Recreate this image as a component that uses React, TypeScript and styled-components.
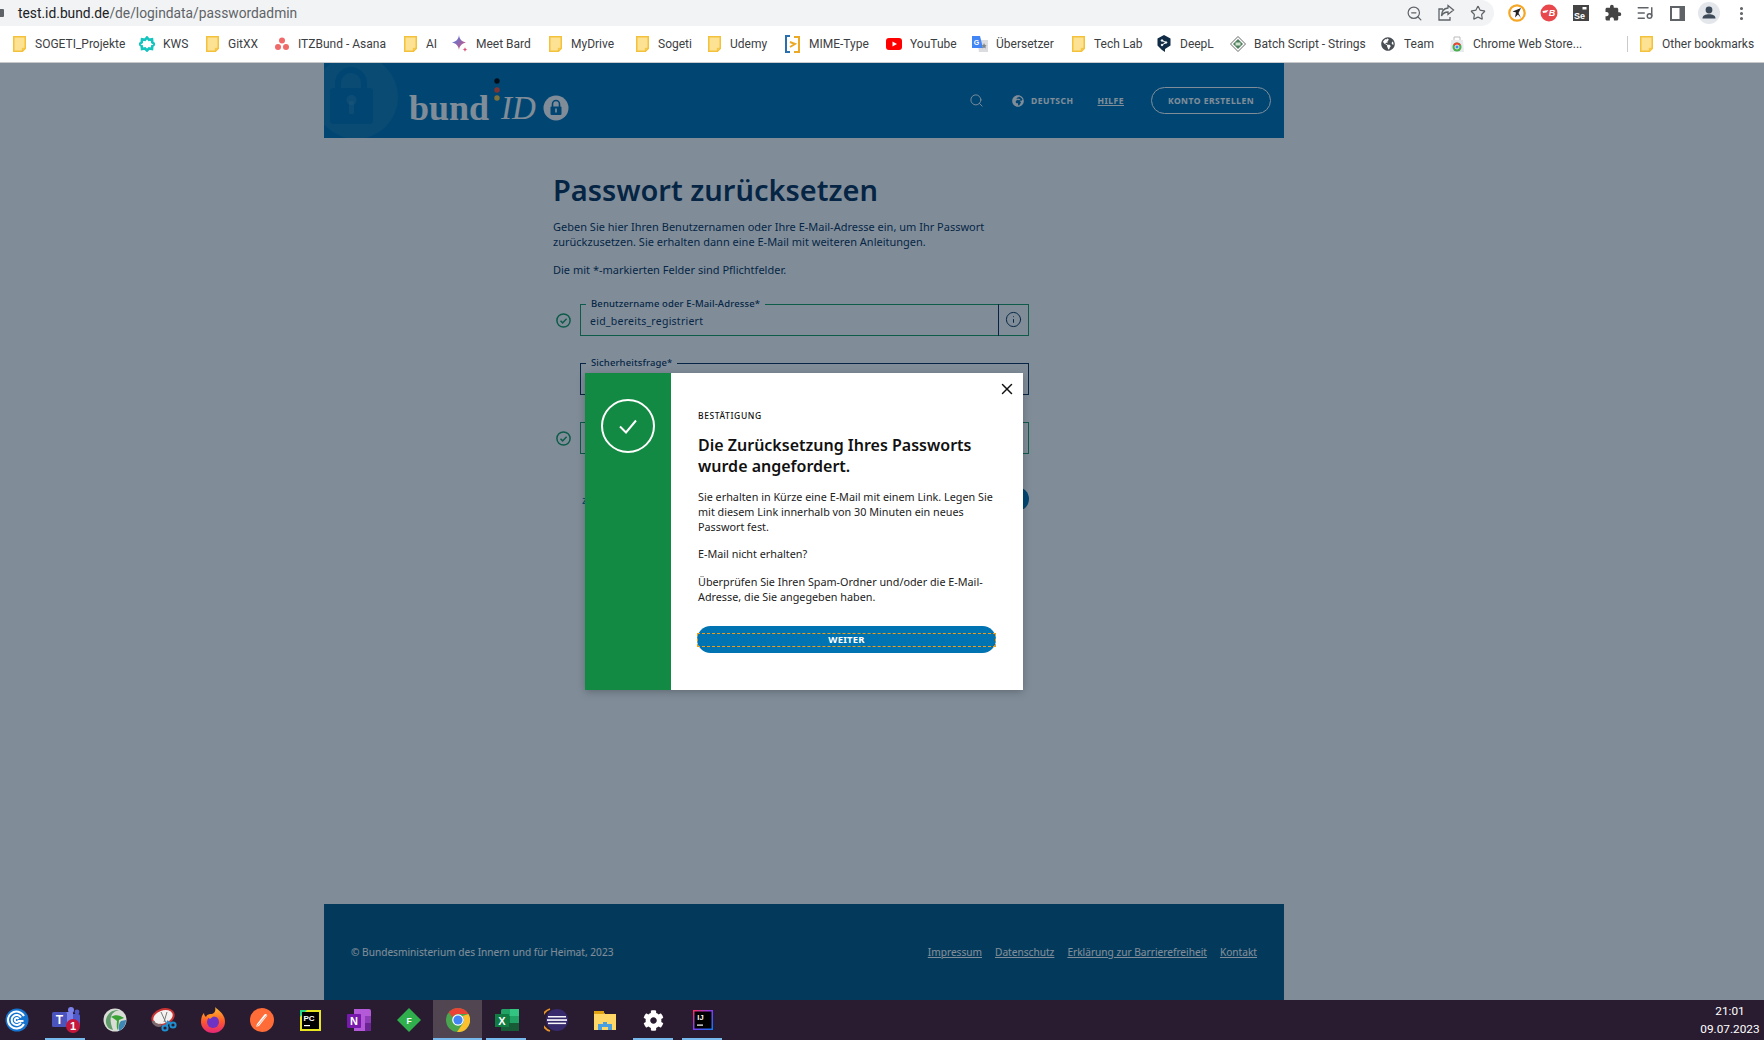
import React from 'react';
import styled, { createGlobalStyle } from 'styled-components';
import { ZoomOut, Star, ListMusic, EllipsisVertical, Search, X, Info } from 'lucide-react';
import { MdExtension } from 'react-icons/md';
import { FaCog, FaGlobeAfrica, FaGlobeAmericas } from 'react-icons/fa';

const Global = createGlobalStyle`
  html, body { margin: 0; padding: 0; height: 100%; overflow: hidden; background: #fff; }
  #root { height: 100%; }
  * { box-sizing: border-box; }
`;

const PLEX = `"Noto Sans", Roboto, sans-serif`;
const UI = `Roboto, "Liberation Sans", sans-serif`;
const NAVY = '#0a2f55';
const OK = '#1a9a5f';

const Screen = styled.div`
  width: 1764px; height: 1040px; display: flex; flex-direction: column; overflow: hidden;
`;

/* ---------- browser chrome ---------- */
const TopBar = styled.div`
  height: 26px; flex: none; display: flex; background: #fff;
`;
const Omnibox = styled.div`
  width: 1494px; height: 26px; background: #f1f3f4; border-radius: 0 13px 13px 0;
  display: flex; align-items: center; padding-left: 18px; position: relative;
`;
const LockStub = styled.span`
  position: absolute; left: -3px; top: 9px; width: 7px; height: 8px; background: #5f6368; border-radius: 1px;
`;
const Url = styled.span`
  font: 13.8px/26px ${UI}; color: #5f6368; flex: 1;
  b { font-weight: 400; color: #202124; }
`;
const Tool = styled.span`
  width: 32px; height: 26px; flex: none; display: flex; align-items: center; justify-content: center; color: #5f6368;
`;
const ToolGroup = styled.div`
  display: flex; padding-left: 7px;
`;

const Bookmarks = styled.div`
  height: 37px; flex: none; display: flex; align-items: center; padding: 0 0 1px 11px; background: #fff;
  border-bottom: 1px solid #c8cacc;
`;
const Bookmark = styled.div<{ $w: number }>`
  flex: 0 0 ${p => p.$w}px; display: flex; align-items: center; white-space: nowrap;
  font: 12px/18px ${UI}; color: #3c4043;
`;
const BookmarkIcon = styled.span`
  width: 16px; height: 16px; margin-right: 8px; flex: none; display: flex; align-items: center; justify-content: center;
`;
const Divider = styled.span`
  width: 1px; height: 16px; background: #c8cacc; flex: none; margin-right: 10px;
`;

const Folder = () => (
  <svg width="13" height="16" viewBox="0 0 13 16">
    <path d="M.75.75h11.5v11.7l-2.8 2.8H.75z" fill="#fde293" stroke="#f3c13b" strokeWidth="1.5" />
    <path d="M9.3 15v-2.7H12" fill="none" stroke="#f3c13b" />
  </svg>
);

/* ---------- page ---------- */
const Viewport = styled.div`
  flex: 1; min-height: 0; position: relative; background: #fff; padding-left: 324px;
`;
const Shell = styled.div`
  width: 960px; height: 100%; display: flex; flex-direction: column;
`;
const Header = styled.header`
  height: 75px; flex: none; background: #0071b0; display: flex; align-items: center; color: #fff; overflow: hidden;
`;
const Watermark = styled.svg`
  width: 85px; height: 75px; flex: none;
`;
const Logo = styled.div`
  display: flex; align-items: center; margin-top: 15px; position: relative;
`;
const LogoBund = styled.span`
  font: 700 36px/36px "Liberation Serif", serif; color: #fff; margin-right: 12px;
`;
const LogoId = styled.span`
  font: italic 400 33px/36px "Liberation Serif", serif; color: #fff; margin-right: 7px;
`;
const LogoDots = styled.svg`
  position: absolute; left: 85px; top: -12px; width: 6px; height: 24px;
`;
const Nav = styled.nav`
  margin-left: auto; display: flex; align-items: center; padding-right: 13px; font-family: ${PLEX}; color: #fff;
`;
const NavSearch = styled.span`
  display: flex; margin-right: 28px;
`;
const NavText = styled.span`
  font-size: 8.5px; font-weight: 700; letter-spacing: .5px; margin-left: 7px; margin-right: 24px;
`;
const NavLink = styled.a`
  font-size: 8.5px; font-weight: 700; letter-spacing: .5px; text-decoration: underline; margin-right: 27px;
`;
const NavButton = styled.button`
  width: 120px; height: 27px; border: 1px solid #fff; border-radius: 14px; background: none; color: #fff;
  font: 700 8.5px ${PLEX}; letter-spacing: .5px; padding: 0;
`;

const Content = styled.main`
  flex: 1; padding: 33px 0 0 229px; background: #fff; color: ${NAVY}; font-family: ${PLEX};
`;
const Column = styled.div`
  width: 476px;
`;
const Title = styled.h1`
  margin: 0; font: 600 29px/38px ${PLEX}; color: ${NAVY};
`;
const Para = styled.p`
  margin: 10px 0 0; font-size: 11px; line-height: 15px; color: ${NAVY}; width: 440px;
`;
const Note = styled(Para)`
  margin-top: 13px;
`;
const FieldRow = styled.div<{ $top: number }>`
  display: flex; align-items: center; margin-top: ${p => p.$top}px; height: 38px;
`;
const Check = styled.span`
  width: 27px; flex: none; display: flex; padding-left: 3px; margin-top: 6px;
`;
const FieldSet = styled.fieldset<{ $ok?: boolean }>`
  width: 449px; height: 38px; margin: 0; padding: 0 0 0 9px; display: flex; align-items: center;
  border: 1px solid ${p => (p.$ok ? OK : NAVY)}; 
`;
const Legend = styled.legend`
  font-size: 9.5px; line-height: 12px; font-weight: 500; letter-spacing: .12px; padding: 0 5px; margin-left: -4px; color: ${NAVY};
`;
const Value = styled.span`
  flex: 1; font-size: 10.5px; color: ${NAVY}; letter-spacing: .25px; margin-top: -3px;
`;
const InfoCell = styled.span`
  width: 30px; flex: none; margin-top: -6px; height: 32px; display: flex; align-items: center; justify-content: center;
  border-left: 1px solid ${NAVY}; color: ${NAVY};
`;
const ActionRow = styled.div`
  display: flex; align-items: center; justify-content: space-between; margin: 33px 0 0 29px;
`;
const BackLink = styled.a`
  font-size: 11px; color: #0071b0;
`;
const Submit = styled.button`
  width: 130px; height: 24px; border: 0; border-radius: 12px; background: #0071b0; color: #fff;
`;
const Footer = styled.footer`
  height: 96px; flex: none; background: #055882; color: #fff; display: flex; align-items: center;
  justify-content: space-between; padding: 0 27px; font: 10.15px ${PLEX};
`;
const FooterLinks = styled.div`
  display: flex; gap: 13px;
`;
const FooterLink = styled.a`
  text-decoration: underline;
`;

/* ---------- modal ---------- */
const Overlay = styled.div`
  position: absolute; inset: 0; background: rgba(1, 28, 51, .5);
`;
const Modal = styled.div`
  position: absolute; left: 585px; top: 310px; width: 438px; height: 317px; display: flex; background: #fff;
  box-shadow: 0 2px 8px rgba(0,0,0,.25); font-family: ${PLEX}; color: #111;
`;
const Side = styled.div`
  width: 86px; flex: none; background: #138a43; display: flex; justify-content: center; padding-top: 26px;
`;
const Body = styled.div`
  flex: 1; padding: 37px 27px 0 27px; position: relative;
`;
const Close = styled.span`
  position: absolute; right: 14px; top: 7px; display: flex; color: #111;
`;
const Eyebrow = styled.div`
  font-size: 8.5px; line-height: 12px; letter-spacing: .6px; font-weight: 500; color: #111;
`;
const ModalTitle = styled.h2`
  margin: 13px 0 0; font: 600 16px/20.5px ${PLEX}; color: #111;
`;
const ModalText = styled.p`
  margin: 13px 0 0; font-size: 10.8px; line-height: 15px; color: #222; width: 305px;
`;
const Gap = styled.span<{ $h: number }>`
  display: block; height: ${p => p.$h}px;
`;
const Primary = styled.button`
  width: 299px; height: 27px; margin: 22px 0 0 -1px; padding: 0; border: 0; border-radius: 14px; background: #0073b3;
  display: flex; align-items: center;
`;
const Focus = styled.span`
  width: 100%; height: 14px; border: 1px dashed #f39c12; color: #fff; font: 700 9.5px/12px ${PLEX}; letter-spacing: .2px;
`;

/* ---------- taskbar ---------- */
const Taskbar = styled.div`
  height: 40px; flex: none; background: #2a1c30; display: flex; align-items: stretch;
`;
const TaskList = styled.div`
  display: flex; margin-left: -8px;
`;
const TaskSlot = styled.div<{ $open?: boolean; $active?: boolean }>`
  width: 49px; height: 40px; position: relative; display: flex; align-items: center; justify-content: center;
  background: ${p => (p.$active ? '#504550' : 'transparent')};
  &::after {
    content: ''; position: absolute; left: ${p => (p.$active ? '0' : '4px')}; right: ${p => (p.$active ? '0' : '5px')}; bottom: 0; height: 2px;
    background: ${p => (p.$open ? '#76b9ed' : 'transparent')};
  }
`;
const Clock = styled.div`
  margin-left: auto; width: 68px; display: flex; flex-direction: column; align-items: center; justify-content: center; gap: 3px;
  color: #fff; font: 11.8px/15px ${UI};
`;

const T = (p: React.SVGProps<SVGTextElement>) => <text fontFamily="Liberation Sans, sans-serif" fontWeight="700" textAnchor="middle" {...p} />;

const icons: React.ReactNode[] = [
  <svg width="24" height="24" viewBox="0 0 24 24"><circle cx="12" cy="12" r="11.5" fill="#1674d1" /><g fill="none" stroke="#fff" strokeWidth="2"><path d="M19 8a8.5 8.5 0 1 0 0 8" /><path d="M16 9.5a5 5 0 1 0 0 5" /><path d="M13.5 11a2 2 0 1 0 0 2h5" /></g></svg>,
  <svg width="32" height="28" viewBox="0 0 32 28"><circle cx="21" cy="4" r="3" fill="#7b83eb" /><circle cx="27" cy="6" r="2.4" fill="#5059c9" /><rect x="17" y="8" width="13" height="13" rx="2" fill="#5059c9" /><rect x="9" y="6" width="14" height="15" rx="1" fill="#7b83eb" /><rect x="2" y="6" width="15" height="15" rx="1.5" fill="#4b53bc" /><T x="9.5" y="18" fontSize="12" fill="#fff">T</T><circle cx="23" cy="20" r="7" fill="#c4173c" /><T x="23" y="24" fontSize="11" fill="#fff">1</T></svg>,
  <svg width="24" height="24" viewBox="0 0 24 24"><circle cx="12" cy="12" r="11.5" fill="#d9ddd6" /><path d="M3 15C2 8 8 1 16 2c-4 1-7 3-8 7-1 3 0 8 2 13-4-1-6-3-7-7z" fill="#5f9b6a" /><path d="M8 9c4-3 9-2 13 1l-5 2-1 10c-2-2-1-8-1-9-2-2-4-3-6-4z" fill="#3aa335" /><path d="M23 12c0 5-3 9-7 11-1-4 0-8 2-10z" fill="#3e86b3" /></svg>,
  <svg width="26" height="24" viewBox="0 0 26 24"><ellipse cx="12" cy="9" rx="11" ry="7.5" transform="rotate(-20 12 9)" fill="#f4f1f1" stroke="#c83232" strokeWidth="2" /><path d="M2 13c1 4 5 5 8 4" fill="none" stroke="#7a6a70" strokeWidth="3" /><path d="M10 4l6 13M16 4l-3 10" stroke="#777" strokeWidth="1" /><g fill="none" stroke="#1e8fd0" strokeWidth="2"><circle cx="14" cy="20" r="2.6" /><circle cx="22" cy="17" r="2.6" /><path d="M15.5 18l2-4M20 16l-4-3" /></g></svg>,
  <svg width="24" height="26" viewBox="0 0 24 26"><defs><linearGradient id="ff" x1="0" y1="0" x2="0" y2="1"><stop offset="0" stopColor="#ffbd2e" /><stop offset=".55" stopColor="#ff5a2b" /><stop offset="1" stopColor="#e6247a" /></linearGradient></defs><path d="M14 0c4 4 10 7 10 15a12 11 0 0 1-24 0c0-4 1-7 3-9 0 2 1 3 2 4 1-3 4-3 6-3 3-1 4-4 3-7z" fill="url(#ff)" /><circle cx="12" cy="15" r="6" fill="#6e32c4" /><path d="M6 9c3-2 8-2 10 1-3-1-5 0-7 2z" fill="#ff8a1f" /></svg>,
  <svg width="24" height="24" viewBox="0 0 24 24"><circle cx="12" cy="12" r="12" fill="#ff6c37" /><path d="M6 19l3-1 8-10c1-1.5-1.5-3-2.600-1.500L7 16z" fill="#fff" /><path d="M5.500 20l13-15" stroke="#ff6c37" strokeWidth=".6" /></svg>,
  <svg width="21" height="21" viewBox="0 0 21 21"><rect width="21" height="21" fill="#e8e61f" /><path d="M0 0h7L0 7z" fill="#21d789" /><rect x="2" y="2" width="17" height="17" fill="#000" /><T x="9" y="11" fontSize="8" fill="#fff">PC</T><rect x="4" y="15" width="6" height="1.200" fill="#fff" /></svg>,
  <svg width="25" height="24" viewBox="0 0 25 24"><path d="M7 1h15a2 2 0 0 1 2 2v18a2 2 0 0 1-2 2H7z" fill="#b45ad8" /><path d="M18 8h6v7h-6z" fill="#8e3cb8" /><path d="M18 15h6v8h-4a2 2 0 0 1-2 0z" fill="#6b2494" /><rect x="0" y="6" width="14" height="14" rx="1" fill="#7719aa" /><T x="7" y="17" fontSize="11" fill="#fff">N</T></svg>,
  <svg width="24" height="24" viewBox="0 0 24 24"><path d="M12 0l12 12-12 12L0 12z" fill="#2fb04c" /><T x="12" y="15.500" fontSize="8.500" fill="#fff">F</T></svg>,
  <svg width="24" height="24" viewBox="0 0 24 24"><circle cx="12" cy="12" r="12" fill="#4aa54f" /><path d="M12 0a12 12 0 0 1 10.400 6H12a6 6 0 0 0-5.500 3.500L2.800 4.300A12 12 0 0 1 12 0z" fill="#ea4335" /><path d="M22.400 6A12 12 0 0 1 11 24l5.500-8a6 6 0 0 0 0-8z" fill="#fbc02d" /><circle cx="12" cy="12" r="5.800" fill="#fff" /><circle cx="12" cy="12" r="4.600" fill="#4285f4" /></svg>,
  <svg width="24" height="22" viewBox="0 0 24 22"><rect x="6" y="0" width="18" height="22" rx="1.500" fill="#21a366" /><rect x="15" y="0" width="9" height="7" fill="#33c481" /><rect x="15" y="7" width="9" height="7" fill="#21a366" /><rect x="6" y="7" width="9" height="7" fill="#107c41" /><rect x="6" y="14" width="18" height="8" fill="#185c37" /><rect x="0" y="5" width="14" height="13" fill="#107c41" /><T x="7" y="15.500" fontSize="11" fill="#fff">X</T></svg>,
  <svg width="24" height="24" viewBox="0 0 24 24"><path d="M6 1A11.500 11.500 0 0 0 6 23" fill="none" stroke="#e6932a" strokeWidth="1.800" /><circle cx="13" cy="12" r="11" fill="#362a6c" /><rect x="4" y="8" width="18" height="1.500" fill="#f7f7fa" /><rect x="3" y="11.200" width="20" height="1.700" fill="#f7f7fa" /><rect x="4" y="14.600" width="18" height="1.500" fill="#f7f7fa" /></svg>,
  <svg width="22" height="20" viewBox="0 0 22 20"><path d="M0 1h9l2 3h11v16H0z" fill="#ffd767" /><path d="M0 1h10v3H0z" fill="#e0a412" /><path d="M4 20v-6h5v-2h4v2h5v6h-4v-3H8v3z" fill="#4a9fe0" /></svg>,
  <FaCog size={21} color="#fff" />,
  <svg width="20" height="20" viewBox="0 0 20 20"><defs><linearGradient id="ij" x1="0" y1="0" x2="1" y2="1"><stop offset="0" stopColor="#fe315d" /><stop offset=".5" stopColor="#7b3ff2" /><stop offset="1" stopColor="#087cfa" /></linearGradient></defs><rect width="20" height="20" fill="url(#ij)" /><rect x="1.500" y="1.500" width="17" height="17" fill="#000" /><T x="7.500" y="10" fontSize="7.500" fill="#fff">IJ</T><rect x="4" y="14.500" width="6" height="1.200" fill="#fff" /></svg>,
];

type BM = { w: number; label: string; icon?: React.ReactNode };
const bookmarks: BM[] = [
  { w: 128, label: 'SOGETI_Projekte' },
  { w: 65, label: 'KWS', icon: <svg width="16" height="16" viewBox="0 0 16 16"><path d="M8 1.500l2 2.300 3-.5.300 3 2 1.700-2 2-.3 3-3-.5-2 2-2-2-3 .5-.3-3-2-2 2-1.700.3-3 3 .5z" fill="#fff" stroke="#14c4bf" strokeWidth="2.600" /></svg> },
  { w: 70, label: 'GitXX' },
  { w: 128, label: 'ITZBund - Asana', icon: <svg width="14" height="14" viewBox="0 0 14 14" fill="#f06a6a"><circle cx="7" cy="3.500" r="3" /><circle cx="3" cy="10" r="3" /><circle cx="11" cy="10" r="3" /></svg> },
  { w: 50, label: 'AI' },
  { w: 95, label: 'Meet Bard', icon: <svg width="16" height="18" viewBox="0 0 16 18"><defs><linearGradient id="bd" x1="0" y1="0" x2="1" y2="1"><stop offset="0" stopColor="#3f7ff0" /><stop offset="1" stopColor="#e0506f" /></linearGradient></defs><path d="M7 0c.5 4 2.500 6.500 7 7.500-4.500 1-6.500 3.500-7 7.500-.5-4-2.500-6.500-7-7.500 4.500-1 6.500-3.500 7-7.500z" fill="url(#bd)" /><path d="M13 12c.2 1.500 1 2.300 2.500 2.500-1.500.2-2.300 1-2.500 2.500-.2-1.500-1-2.300-2.500-2.500 1.500-.2 2.300-1 2.500-2.500z" fill="#d9547a" /></svg> },
  { w: 87, label: 'MyDrive' },
  { w: 72, label: 'Sogeti' },
  { w: 79, label: 'Udemy' },
  { w: 101, label: 'MIME-Type', icon: <svg width="16" height="18" viewBox="0 0 16 18" fill="none" strokeWidth="2"><path d="M5 1H1v16h4" stroke="#2a6fb0" /><path d="M9 2h5v15H9" stroke="#eba927" /><path d="M5 7l5 2-5 3" stroke="#eba927" /></svg> },
  { w: 86, label: 'YouTube', icon: <svg width="16" height="12" viewBox="0 0 16 12"><rect width="16" height="12" rx="3" fill="#f00" /><path d="M6.500 3.500v5L11 6z" fill="#fff" /></svg> },
  { w: 98, label: 'Übersetzer', icon: <svg width="16" height="16" viewBox="0 0 16 16"><path d="M5 4h11v12H7z" fill="#dadce0" /><path d="M0 0h8l3 12H0z" fill="#4285f4" /><text x="4.500" y="9" fontFamily="Liberation Sans, sans-serif" fontWeight="700" fontSize="7" fill="#fff" textAnchor="middle">G</text><path d="M12 7l1 2 1.500.3-1 1.300.2 1.800-1.700-.8-1.500.8.2-1.800-1-1.300 1.500-.3z" fill="#80868b" /></svg> },
  { w: 86, label: 'Tech Lab' },
  { w: 74, label: 'DeepL', icon: <svg width="14" height="17" viewBox="0 0 14 17"><path d="M7 0l6.500 3.500v7L8 14v3l-3-2-4.500-4.500v-7z" fill="#0f2b46" /><g stroke="#fff" strokeWidth="1" fill="#fff"><path d="M5 5.500L9 7.500 5 10" fill="none" /><circle cx="5" cy="5.500" r=".8" /><circle cx="9" cy="7.500" r=".8" /><circle cx="5" cy="10" r=".8" /></g></svg> },
  { w: 150, label: 'Batch Script - Strings', icon: <svg width="16" height="16" viewBox="0 0 16 16"><path d="M8 .5L15.500 8 8 15.500.5 8z" fill="#fff" stroke="#666" /><path d="M8 3l5 5-5 5-5-5z" fill="#4f7f5f" /><rect x="5.500" y="6.500" width="5" height="3" fill="#cfe3cf" /></svg> },
  { w: 69, label: 'Team', icon: <FaGlobeAmericas size={14} color="#4a4f55" /> },
  { w: 178, label: 'Chrome Web Store...', icon: <svg width="14" height="16" viewBox="0 0 14 16"><path d="M1 4h12l1 12H0z" fill="#e8eaed" /><path d="M4 4V1h6v3" fill="none" stroke="#bbb" /><circle cx="7" cy="11" r="4.500" fill="#4caf50" /><path d="M7 6.500A4.500 4.500 0 0 1 11 9H7a2 2 0 0 0-2 1L3.300 8.500A4.500 4.500 0 0 1 7 6.500z" fill="#ea4335" /><circle cx="7" cy="11" r="2" fill="#4285f4" stroke="#fff" strokeWidth=".8" /></svg> },
];

const CheckMini = () => (
  <svg width="15" height="15" viewBox="0 0 15 15" fill="none" stroke={OK} strokeWidth="1.500">
    <circle cx="7.500" cy="7.500" r="6.600" />
    <path d="M4.500 7.800l2.100 2.100 4-4.200" />
  </svg>
);

export default function App() {
  return (
    <Screen>
      <Global />
      <TopBar>
        <Omnibox>
          <LockStub />
          <Url><b>test.id.bund.de</b>/de/logindata/passwordadmin</Url>
          <Tool><ZoomOut size={17} strokeWidth={1.7} /></Tool>
          <Tool>
            <svg width="18" height="18" viewBox="0 0 18 18" fill="none" stroke="#5f6368" strokeWidth="1.300">
              <path d="M6 5H2v11h11v-3" />
              <path d="M11 1.500L16.500 6 11 10.500V8C8 8 6 9 4.500 12 4.500 7.500 7 4.500 11 4z" />
            </svg>
          </Tool>
          <Tool><Star size={16} strokeWidth={1.8} /></Tool>
        </Omnibox>
        <ToolGroup>
          <Tool>
            <svg width="18" height="18" viewBox="0 0 18 18">
              <circle cx="9" cy="9" r="7.700" fill="#fff" stroke="#f5a623" strokeWidth="2.200" />
              <path d="M13 4L4.500 7.500l3.500 1-1 5 3-3 3 3.500-2.500-5z" fill="#222" />
            </svg>
          </Tool>
          <Tool>
            <svg width="18" height="18" viewBox="0 0 18 18">
              <circle cx="9" cy="9" r="8.500" fill="#e8474c" />
              <path d="M2.500 7l6-1-2 2.500L3 9z" fill="#fff" />
              <text x="12" y="12" fontFamily="Liberation Sans, sans-serif" fontStyle="italic" fontWeight="700" fontSize="9" fill="#fff" textAnchor="middle">B</text>
            </svg>
          </Tool>
          <Tool>
            <svg width="16" height="16" viewBox="0 0 16 16">
              <rect width="16" height="16" fill="#444" />
              <rect x="9.500" y="2" width="4" height="2.500" fill="#fff" />
              <text x="6.500" y="14" fontFamily="Liberation Sans, sans-serif" fontWeight="700" fontSize="9" fill="#fff" textAnchor="middle">Se</text>
            </svg>
          </Tool>
          <Tool><MdExtension size={18} color="#444" /></Tool>
          <Tool><ListMusic size={18} strokeWidth={2} color="#5f6368" /></Tool>
          <Tool>
            <svg width="15" height="15" viewBox="0 0 15 15">
              <rect width="15" height="15" fill="#5f6368" />
              <rect x="2" y="2" width="7.500" height="11" fill="#fff" />
            </svg>
          </Tool>
          <Tool>
            <svg width="22" height="22" viewBox="0 0 22 22">
              <circle cx="11" cy="11" r="11" fill="#e3e6ea" />
              <circle cx="11" cy="8" r="3.400" fill="#3c4a5a" />
              <path d="M4.500 16.500c0-3 3-4.300 6.500-4.300s6.500 1.300 6.500 4.300z" fill="#3c4a5a" />
            </svg>
          </Tool>
          <Tool><EllipsisVertical size={17} strokeWidth={2.400} /></Tool>
        </ToolGroup>
      </TopBar>

      <Bookmarks>
        {bookmarks.map(b => (
          <Bookmark key={b.label} $w={b.w}>
            <BookmarkIcon>{b.icon ?? <Folder />}</BookmarkIcon>
            {b.label}
          </Bookmark>
        ))}
        <Divider />
        <Bookmark $w={110}>
          <BookmarkIcon><Folder /></BookmarkIcon>
          Other bookmarks
        </Bookmark>
      </Bookmarks>

      <Viewport>
        <Shell>
          <Header>
            <Watermark viewBox="0 0 85 75">
              <circle cx="32" cy="34" r="42" fill="rgba(255,255,255,.07)" />
              <path d="M14 28v-8a13 13 0 0 1 26 0v8" fill="none" stroke="#0071b0" strokeWidth="6" />
              <rect x="6" y="25" width="43" height="36" rx="3" fill="#0071b0" />
              <circle cx="27.500" cy="37" r="5" fill="rgba(255,255,255,.09)" />
              <rect x="25" y="38" width="5" height="13" rx="1.500" fill="rgba(255,255,255,.09)" />
            </Watermark>
            <Logo>
              <LogoDots viewBox="0 0 6 24">
                <circle cx="3" cy="3" r="2.700" fill="#000" />
                <circle cx="3" cy="12" r="2.700" fill="#ff4a2a" />
                <circle cx="3" cy="20" r="2.700" fill="#ffc83a" />
              </LogoDots>
              <LogoBund>bund</LogoBund>
              <LogoId>ID</LogoId>
              <svg width="26" height="26" viewBox="0 0 26 26">
                <circle cx="13" cy="13" r="12.500" fill="#fff" />
                <path d="M9.500 12V9a3.500 3.500 0 0 1 7 0v3" fill="none" stroke="#0071b0" strokeWidth="1.600" />
                <rect x="7.500" y="11.500" width="11" height="8.500" rx="1" fill="#0071b0" />
                <rect x="12.200" y="13.500" width="1.600" height="4" fill="#fff" />
              </svg>
            </Logo>
            <Nav>
              <NavSearch><Search size={15} strokeWidth={1.500} /></NavSearch>
              <FaGlobeAfrica size={12} />
              <NavText>DEUTSCH</NavText>
              <NavLink>HILFE</NavLink>
              <NavButton>KONTO ERSTELLEN</NavButton>
            </Nav>
          </Header>

          <Content>
            <Column>
              <Title>Passwort zurücksetzen</Title>
              <Para>Geben Sie hier Ihren Benutzernamen oder Ihre E-Mail-Adresse ein, um Ihr Passwort zurückzusetzen. Sie erhalten dann eine E-Mail mit weiteren Anleitungen.</Para>
              <Note>Die mit *-markierten Felder sind Pflichtfelder.</Note>
              <FieldRow $top={21}>
                <Check><CheckMini /></Check>
                <FieldSet $ok>
                  <Legend>Benutzername oder E-Mail-Adresse*</Legend>
                  <Value>eid_bereits_registriert</Value>
                  <InfoCell><Info size={17} strokeWidth={1.400} /></InfoCell>
                </FieldSet>
              </FieldRow>
              <FieldRow $top={21}>
                <Check />
                <FieldSet>
                  <Legend>Sicherheitsfrage*</Legend>
                </FieldSet>
              </FieldRow>
              <FieldRow $top={21}>
                <Check><CheckMini /></Check>
                <FieldSet $ok>
                  <Legend>Antwort*</Legend>
                </FieldSet>
              </FieldRow>
              <ActionRow>
                <BackLink>zurück zur Anmeldung</BackLink>
                <Submit />
              </ActionRow>
            </Column>
          </Content>

          <Footer>
            <span>© Bundesministerium des Innern und für Heimat, 2023</span>
            <FooterLinks>
              <FooterLink>Impressum</FooterLink>
              <FooterLink>Datenschutz</FooterLink>
              <FooterLink>Erklärung zur Barrierefreiheit</FooterLink>
              <FooterLink>Kontakt</FooterLink>
            </FooterLinks>
          </Footer>
        </Shell>

        <Overlay />
        <Modal>
          <Side>
            <svg width="54" height="54" viewBox="0 0 54 54" fill="none" stroke="#fff">
              <circle cx="27" cy="27" r="26" strokeWidth="2" />
              <path d="M19 27.500l6 6 10-12" strokeWidth="2" />
            </svg>
          </Side>
          <Body>
            <Close><X size={18} strokeWidth={2} /></Close>
            <Eyebrow>BESTÄTIGUNG</Eyebrow>
            <ModalTitle>Die Zurücksetzung Ihres Passworts wurde angefordert.</ModalTitle>
            <ModalText>
              Sie erhalten in Kürze eine E-Mail mit einem Link. Legen Sie mit diesem Link innerhalb von 30 Minuten ein neues Passwort fest.
              <Gap $h={12} />
              E-Mail nicht erhalten?
              <Gap $h={13} />
              Überprüfen Sie Ihren Spam-Ordner und/oder die E-Mail-Adresse, die Sie angegeben haben.
            </ModalText>
            <Primary><Focus>WEITER</Focus></Primary>
          </Body>
        </Modal>
      </Viewport>

      <Taskbar>
        <TaskList>
          {icons.map((ic, i) => (
            <TaskSlot key={i} $open={[1, 9, 10, 13, 14].includes(i)} $active={i === 9}>{ic}</TaskSlot>
          ))}
        </TaskList>
        <Clock>
          <span>21:01</span>
          <span>09.07.2023</span>
        </Clock>
      </Taskbar>
    </Screen>
  );
}
